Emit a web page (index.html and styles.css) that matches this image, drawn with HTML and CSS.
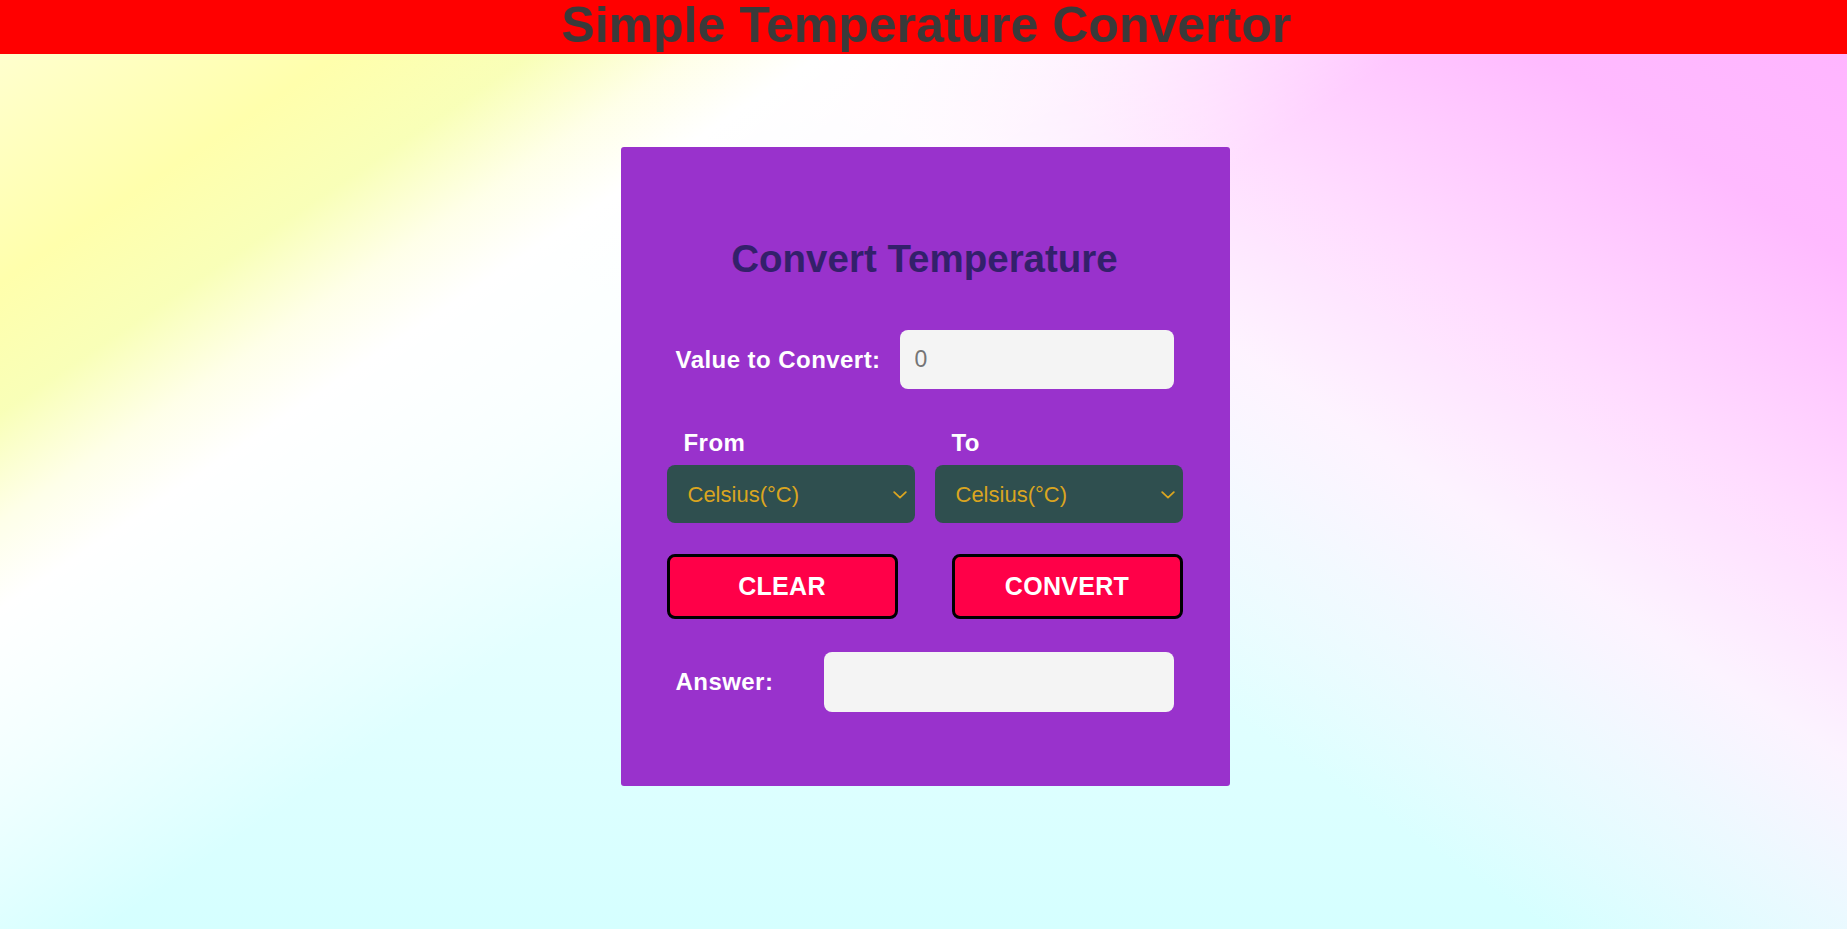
FILE: index.html
```html
<!DOCTYPE html>
<html lang="en">
<head>
<meta charset="utf-8">
<title>Simple Temperature Convertor</title>
<link rel="stylesheet" href="styles.css">
</head>
<body>
<header class="topbar">
  <h1 class="title">Simple Temperature Convertor</h1>
</header>
<main class="card">
  <h2 class="card-title">Convert Temperature</h2>
  <div class="field-row">
    <label class="label" for="value">Value to Convert:</label>
    <input class="text-input value-input" id="value" type="text" placeholder="0">
  </div>
  <div class="unit-labels">
    <span class="label unit-label">From</span>
    <span class="label unit-label">To</span>
  </div>
  <div class="unit-selects">
    <div class="select-wrap">
      <select class="unit-select">
        <option>Celsius(°C)</option>
        <option>Fahrenheit(°F)</option>
        <option>Kelvin(K)</option>
      </select>
      <svg class="chevron" width="14" height="8" viewBox="0 0 14 8"><path d="M1.2 1.2 L7 6.6 L12.8 1.2" fill="none" stroke="#daa520" stroke-width="1.8" stroke-linecap="round" stroke-linejoin="round"/></svg>
    </div>
    <div class="select-wrap">
      <select class="unit-select">
        <option>Celsius(°C)</option>
        <option>Fahrenheit(°F)</option>
        <option>Kelvin(K)</option>
      </select>
      <svg class="chevron" width="14" height="8" viewBox="0 0 14 8"><path d="M1.2 1.2 L7 6.6 L12.8 1.2" fill="none" stroke="#daa520" stroke-width="1.8" stroke-linecap="round" stroke-linejoin="round"/></svg>
    </div>
  </div>
  <div class="button-row">
    <button class="btn" type="button">CLEAR</button>
    <button class="btn" type="button">CONVERT</button>
  </div>
  <div class="field-row answer-row">
    <label class="label" for="answer">Answer:</label>
    <input class="text-input answer-input" id="answer" type="text" readonly>
  </div>
</main>
</body>
</html>
```

FILE: styles.css
```css
html, body {
  margin: 0;
  padding: 0;
}

body {
  min-height: 100vh;
  font-family: "Liberation Sans", Arial, sans-serif;
  background:
    linear-gradient(146deg,
      rgba(255, 255, 214, 1) 0%,
      rgba(255, 255, 172, 1) 13%,
      rgba(249, 255, 180, 0.95) 19%,
      rgba(255, 255, 232, 0.97) 24%,
      rgba(255, 255, 255, 1) 28%,
      rgba(255, 255, 255, 0.6) 36%,
      rgba(255, 255, 255, 0) 46%),
    linear-gradient(214deg,
      rgba(255, 180, 255, 1) 0%,
      rgba(255, 186, 255, 1) 12%,
      rgba(255, 220, 255, 1) 25%,
      rgba(255, 242, 255, 0.9) 35%,
      rgba(250, 245, 255, 0.6) 42%,
      rgba(255, 255, 255, 0) 52%),
    linear-gradient(to bottom, #f2ffff 40%, #d5ffff 100%);
}

.topbar {
  height: 54px;
  padding-left: 6px;
  background: #ff0000;
  text-align: center;
}

.title {
  margin: 0;
  font-size: 50px;
  line-height: 50px;
  font-weight: bold;
  color: #3a3a3a;
}

.card {
  box-sizing: border-box;
  width: 609px;
  margin: 93px 0 0 calc(50% - 303px);
  padding: 90px 47px 74px 46px;
  background: #9932cc;
  border-radius: 3px;
}

.card-title {
  margin: 0;
  font-size: 38.5px;
  line-height: 44px;
  font-weight: bold;
  text-align: center;
  color: #33206b;
}

.label {
  font-size: 24px;
  letter-spacing: 0.45px;
  font-weight: bold;
  color: #ffffff;
}

.field-row {
  display: flex;
  align-items: center;
  justify-content: space-between;
  margin-top: 49px;
  padding: 0 9px 0 9px;
}

.answer-row {
  margin-top: 33px;
}

.text-input {
  box-sizing: border-box;
  height: 59px;
  border: none;
  border-radius: 8px;
  background: #f4f4f4;
  padding: 0 15px;
  font-family: "Liberation Sans", Arial, sans-serif;
  font-size: 23px;
  color: #333;
  outline: none;
}

.text-input::placeholder {
  color: #757575;
}

.value-input {
  width: 274px;
}

.answer-input {
  width: 350px;
  height: 60px;
}

.unit-labels {
  display: grid;
  grid-template-columns: 248px 248px;
  column-gap: 20px;
  margin-top: 40px;
  line-height: 28px;
}

.unit-label {
  padding-left: 17px;
}

.unit-selects {
  display: grid;
  grid-template-columns: 248px 248px;
  column-gap: 20px;
  margin-top: 8px;
}

.select-wrap {
  position: relative;
  height: 58px;
}

.unit-select {
  appearance: none;
  -webkit-appearance: none;
  box-sizing: border-box;
  width: 100%;
  height: 58px;
  border: none;
  border-radius: 8px;
  background: #2f4f4f;
  color: #daa520;
  font-family: "Liberation Sans", Arial, sans-serif;
  font-size: 22px;
  padding: 0 30px 0 21px;
  outline: none;
}

.chevron {
  position: absolute;
  right: 8px;
  top: 26px;
  pointer-events: none;
}

.button-row {
  display: flex;
  justify-content: space-between;
  margin-top: 31px;
}

.btn {
  box-sizing: border-box;
  width: 231px;
  height: 65px;
  background: #ff0048;
  border: 3px solid #000;
  border-radius: 8px;
  color: #ffffff;
  font-family: "Liberation Sans", Arial, sans-serif;
  font-size: 25px;
  letter-spacing: 0.3px;
  font-weight: bold;
  cursor: pointer;
}
```
